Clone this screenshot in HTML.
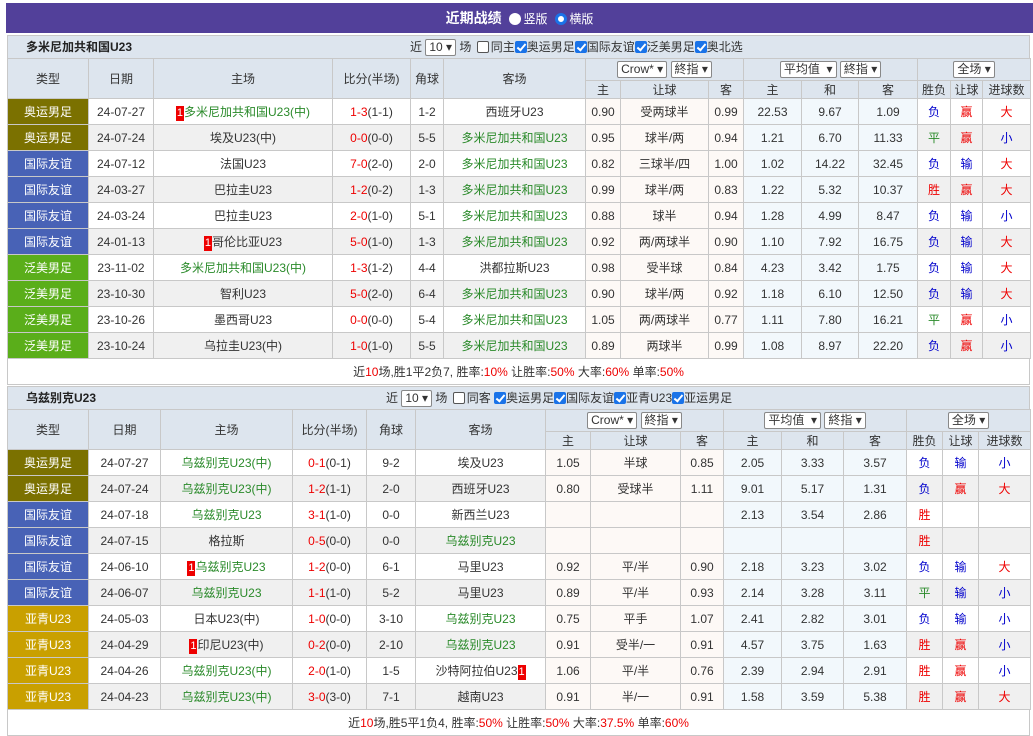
<!DOCTYPE html>
<html><head><meta charset="utf-8"><style>
*{margin:0;padding:0;box-sizing:border-box}
body{width:1033px;height:736px;background:#fff;font-family:"Liberation Sans","Noto Sans CJK SC",sans-serif;font-size:12px;color:#333;position:relative;overflow:hidden}
.title{position:absolute;left:6px;top:3px;width:1027px;height:30px;background:#52409a;color:#fff;text-align:center;line-height:30px;font-size:14px;font-weight:bold}
.title .r{display:inline-block;width:12px;height:12px;border-radius:50%;background:#fff;vertical-align:-2px;margin:0 2px 0 4px}
.title .r2{background:#fff;border:3px solid #1a73e8}
.title small{font-size:12px;font-weight:normal}
.sec{position:absolute;left:7px;width:1023px}
.sh{height:23px;background:#dde5ee;border:1px solid #c8c8c8;border-bottom:none;position:relative;line-height:23px}
.sh b{position:absolute;left:18px;font-size:12px;color:#222}
.sh .ctl{position:absolute;top:0}
.sel{display:inline-block;border:1px solid #888;background:#fff;height:17px;line-height:15px;padding:0 3px;vertical-align:middle;font-size:12px;border-radius:2px}
.cb{display:inline-block;width:12px;height:12px;border:1px solid #555;border-radius:2px;vertical-align:-2px;background:#fff;margin:0 2px}
.ck{display:inline-block;width:12px;height:12px;background:#1a73e8;border-radius:2px;vertical-align:-2px;position:relative;overflow:hidden}
.ck:after{content:"";position:absolute;left:4px;top:1px;width:3px;height:7px;border:solid #fff;border-width:0 2px 2px 0;transform:rotate(40deg)}
table{border-collapse:collapse;table-layout:fixed;width:1023px}
td,th{border:1px solid #c8c8c8;text-align:center;font-weight:normal;white-space:nowrap;overflow:hidden;padding:0}
th{background:#dde5ee;color:#333}
tr.h1 th{height:22px}tr.h2 th{height:17px}
tr.d td{height:26px}
tr.d:nth-child(even) td{background:#f0f0f0}
tr.d td.c{background:#fdf9f6!important}
tr.d td.a{background:#f2f8fc!important}
td.t{color:#fff!important}
.ao{background:#7b7100!important}.gj{background:#4862b6!important}.fm{background:#5aae1a!important}.yq{background:#c9a000!important}
.g{color:#2a8a2a}.rd{color:#e00}.bl{color:#0000cc}.gr{color:#2a8a2a}
.n{display:inline-block;background:#e00;color:#fff;width:8px;line-height:15px;font-size:11px}
.sum{height:26px;border:1px solid #c8c8c8;border-top:none;text-align:center;line-height:26px;padding-left:0}
.sum i{font-style:normal;color:#e00}
</style></head><body>
<div class="title">近期战绩 <span class="r"></span><small>竖版</small> <span class="r r2"></span><small>横版</small></div>

<div class="sec" style="top:35px">
<div class="sh"><b>多米尼加共和国U23</b><span class="ctl" style="left:402px">近 <span class="sel">10 ▾</span> 场 <span class="cb"></span>同主<span class="ck"></span>奥运男足<span class="ck"></span>国际友谊<span class="ck"></span>泛美男足<span class="ck"></span>奥北选</span></div>
<table>
<colgroup><col style="width:81px"><col style="width:65px"><col style="width:179px"><col style="width:78px"><col style="width:33px"><col style="width:142px"><col style="width:35px"><col style="width:88px"><col style="width:35px"><col style="width:58px"><col style="width:57px"><col style="width:59px"><col style="width:33px"><col style="width:32px"><col style="width:48px"></colgroup>
<tr class="h1"><th rowspan="2">类型</th><th rowspan="2">日期</th><th rowspan="2">主场</th><th rowspan="2">比分(半场)</th><th rowspan="2">角球</th><th rowspan="2">客场</th><th colspan="3"><span class="sel">Crow* ▾</span> <span class="sel">終指 ▾</span></th><th colspan="3"><span class="sel">平均值 &nbsp;▾</span> <span class="sel">終指 ▾</span></th><th colspan="3"><span class="sel">全场 ▾</span></th></tr>
<tr class="h2"><th>主</th><th>让球</th><th>客</th><th>主</th><th>和</th><th>客</th><th>胜负</th><th>让球</th><th>进球数</th></tr>
<tr class="d"><td class="t ao">奥运男足</td><td>24-07-27</td><td class="g"><span class="n">1</span>多米尼加共和国U23(中)</td><td><span class="rd">1-3</span>(1-1)</td><td>1-2</td><td>西班牙U23</td><td class="c">0.90</td><td class="c">受两球半</td><td class="c">0.99</td><td class="a">22.53</td><td class="a">9.67</td><td class="a">1.09</td><td class="bl">负</td><td class="rd">赢</td><td class="rd">大</td></tr>
<tr class="d"><td class="t ao">奥运男足</td><td>24-07-24</td><td>埃及U23(中)</td><td><span class="rd">0-0</span>(0-0)</td><td>5-5</td><td class="g">多米尼加共和国U23</td><td class="c">0.95</td><td class="c">球半/两</td><td class="c">0.94</td><td class="a">1.21</td><td class="a">6.70</td><td class="a">11.33</td><td class="gr">平</td><td class="rd">赢</td><td class="bl">小</td></tr>
<tr class="d"><td class="t gj">国际友谊</td><td>24-07-12</td><td>法国U23</td><td><span class="rd">7-0</span>(2-0)</td><td>2-0</td><td class="g">多米尼加共和国U23</td><td class="c">0.82</td><td class="c">三球半/四</td><td class="c">1.00</td><td class="a">1.02</td><td class="a">14.22</td><td class="a">32.45</td><td class="bl">负</td><td class="bl">输</td><td class="rd">大</td></tr>
<tr class="d"><td class="t gj">国际友谊</td><td>24-03-27</td><td>巴拉圭U23</td><td><span class="rd">1-2</span>(0-2)</td><td>1-3</td><td class="g">多米尼加共和国U23</td><td class="c">0.99</td><td class="c">球半/两</td><td class="c">0.83</td><td class="a">1.22</td><td class="a">5.32</td><td class="a">10.37</td><td class="rd">胜</td><td class="rd">赢</td><td class="rd">大</td></tr>
<tr class="d"><td class="t gj">国际友谊</td><td>24-03-24</td><td>巴拉圭U23</td><td><span class="rd">2-0</span>(1-0)</td><td>5-1</td><td class="g">多米尼加共和国U23</td><td class="c">0.88</td><td class="c">球半</td><td class="c">0.94</td><td class="a">1.28</td><td class="a">4.99</td><td class="a">8.47</td><td class="bl">负</td><td class="bl">输</td><td class="bl">小</td></tr>
<tr class="d"><td class="t gj">国际友谊</td><td>24-01-13</td><td><span class="n">1</span>哥伦比亚U23</td><td><span class="rd">5-0</span>(1-0)</td><td>1-3</td><td class="g">多米尼加共和国U23</td><td class="c">0.92</td><td class="c">两/两球半</td><td class="c">0.90</td><td class="a">1.10</td><td class="a">7.92</td><td class="a">16.75</td><td class="bl">负</td><td class="bl">输</td><td class="rd">大</td></tr>
<tr class="d"><td class="t fm">泛美男足</td><td>23-11-02</td><td class="g">多米尼加共和国U23(中)</td><td><span class="rd">1-3</span>(1-2)</td><td>4-4</td><td>洪都拉斯U23</td><td class="c">0.98</td><td class="c">受半球</td><td class="c">0.84</td><td class="a">4.23</td><td class="a">3.42</td><td class="a">1.75</td><td class="bl">负</td><td class="bl">输</td><td class="rd">大</td></tr>
<tr class="d"><td class="t fm">泛美男足</td><td>23-10-30</td><td>智利U23</td><td><span class="rd">5-0</span>(2-0)</td><td>6-4</td><td class="g">多米尼加共和国U23</td><td class="c">0.90</td><td class="c">球半/两</td><td class="c">0.92</td><td class="a">1.18</td><td class="a">6.10</td><td class="a">12.50</td><td class="bl">负</td><td class="bl">输</td><td class="rd">大</td></tr>
<tr class="d"><td class="t fm">泛美男足</td><td>23-10-26</td><td>墨西哥U23</td><td><span class="rd">0-0</span>(0-0)</td><td>5-4</td><td class="g">多米尼加共和国U23</td><td class="c">1.05</td><td class="c">两/两球半</td><td class="c">0.77</td><td class="a">1.11</td><td class="a">7.80</td><td class="a">16.21</td><td class="gr">平</td><td class="rd">赢</td><td class="bl">小</td></tr>
<tr class="d"><td class="t fm">泛美男足</td><td>23-10-24</td><td>乌拉圭U23(中)</td><td><span class="rd">1-0</span>(1-0)</td><td>5-5</td><td class="g">多米尼加共和国U23</td><td class="c">0.89</td><td class="c">两球半</td><td class="c">0.99</td><td class="a">1.08</td><td class="a">8.97</td><td class="a">22.20</td><td class="bl">负</td><td class="rd">赢</td><td class="bl">小</td></tr>
</table>
<div class="sum">近<i>10</i>场,胜1平2负7, 胜率:<i>10%</i> 让胜率:<i>50%</i> 大率:<i>60%</i> 单率:<i>50%</i></div>
</div>

<div class="sec" style="top:386px">
<div class="sh"><b>乌兹别克U23</b><span class="ctl" style="left:378px">近 <span class="sel">10 ▾</span> 场 <span class="cb"></span>同客 <span class="ck"></span>奥运男足<span class="ck"></span>国际友谊<span class="ck"></span>亚青U23<span class="ck"></span>亚运男足</span></div>
<table>
<colgroup><col style="width:81px"><col style="width:72px"><col style="width:132px"><col style="width:74px"><col style="width:49px"><col style="width:130px"><col style="width:45px"><col style="width:90px"><col style="width:43px"><col style="width:58px"><col style="width:62px"><col style="width:63px"><col style="width:36px"><col style="width:36px"><col style="width:52px"></colgroup>
<tr class="h1"><th rowspan="2">类型</th><th rowspan="2">日期</th><th rowspan="2">主场</th><th rowspan="2">比分(半场)</th><th rowspan="2">角球</th><th rowspan="2">客场</th><th colspan="3"><span class="sel">Crow* ▾</span> <span class="sel">終指 ▾</span></th><th colspan="3"><span class="sel">平均值 &nbsp;▾</span> <span class="sel">終指 ▾</span></th><th colspan="3"><span class="sel">全场 ▾</span></th></tr>
<tr class="h2"><th>主</th><th>让球</th><th>客</th><th>主</th><th>和</th><th>客</th><th>胜负</th><th>让球</th><th>进球数</th></tr>
<tr class="d"><td class="t ao">奥运男足</td><td>24-07-27</td><td class="g">乌兹别克U23(中)</td><td><span class="rd">0-1</span>(0-1)</td><td>9-2</td><td>埃及U23</td><td class="c">1.05</td><td class="c">半球</td><td class="c">0.85</td><td class="a">2.05</td><td class="a">3.33</td><td class="a">3.57</td><td class="bl">负</td><td class="bl">输</td><td class="bl">小</td></tr>
<tr class="d"><td class="t ao">奥运男足</td><td>24-07-24</td><td class="g">乌兹别克U23(中)</td><td><span class="rd">1-2</span>(1-1)</td><td>2-0</td><td>西班牙U23</td><td class="c">0.80</td><td class="c">受球半</td><td class="c">1.11</td><td class="a">9.01</td><td class="a">5.17</td><td class="a">1.31</td><td class="bl">负</td><td class="rd">赢</td><td class="rd">大</td></tr>
<tr class="d"><td class="t gj">国际友谊</td><td>24-07-18</td><td class="g">乌兹别克U23</td><td><span class="rd">3-1</span>(1-0)</td><td>0-0</td><td>新西兰U23</td><td class="c"></td><td class="c"></td><td class="c"></td><td class="a">2.13</td><td class="a">3.54</td><td class="a">2.86</td><td class="rd">胜</td><td></td><td></td></tr>
<tr class="d"><td class="t gj">国际友谊</td><td>24-07-15</td><td>格拉斯</td><td><span class="rd">0-5</span>(0-0)</td><td>0-0</td><td class="g">乌兹别克U23</td><td class="c"></td><td class="c"></td><td class="c"></td><td class="a"></td><td class="a"></td><td class="a"></td><td class="rd">胜</td><td></td><td></td></tr>
<tr class="d"><td class="t gj">国际友谊</td><td>24-06-10</td><td class="g"><span class="n">1</span>乌兹别克U23</td><td><span class="rd">1-2</span>(0-0)</td><td>6-1</td><td>马里U23</td><td class="c">0.92</td><td class="c">平/半</td><td class="c">0.90</td><td class="a">2.18</td><td class="a">3.23</td><td class="a">3.02</td><td class="bl">负</td><td class="bl">输</td><td class="rd">大</td></tr>
<tr class="d"><td class="t gj">国际友谊</td><td>24-06-07</td><td class="g">乌兹别克U23</td><td><span class="rd">1-1</span>(1-0)</td><td>5-2</td><td>马里U23</td><td class="c">0.89</td><td class="c">平/半</td><td class="c">0.93</td><td class="a">2.14</td><td class="a">3.28</td><td class="a">3.11</td><td class="gr">平</td><td class="bl">输</td><td class="bl">小</td></tr>
<tr class="d"><td class="t yq">亚青U23</td><td>24-05-03</td><td>日本U23(中)</td><td><span class="rd">1-0</span>(0-0)</td><td>3-10</td><td class="g">乌兹别克U23</td><td class="c">0.75</td><td class="c">平手</td><td class="c">1.07</td><td class="a">2.41</td><td class="a">2.82</td><td class="a">3.01</td><td class="bl">负</td><td class="bl">输</td><td class="bl">小</td></tr>
<tr class="d"><td class="t yq">亚青U23</td><td>24-04-29</td><td><span class="n">1</span>印尼U23(中)</td><td><span class="rd">0-2</span>(0-0)</td><td>2-10</td><td class="g">乌兹别克U23</td><td class="c">0.91</td><td class="c">受半/一</td><td class="c">0.91</td><td class="a">4.57</td><td class="a">3.75</td><td class="a">1.63</td><td class="rd">胜</td><td class="rd">赢</td><td class="bl">小</td></tr>
<tr class="d"><td class="t yq">亚青U23</td><td>24-04-26</td><td class="g">乌兹别克U23(中)</td><td><span class="rd">2-0</span>(1-0)</td><td>1-5</td><td>沙特阿拉伯U23<span class="n">1</span></td><td class="c">1.06</td><td class="c">平/半</td><td class="c">0.76</td><td class="a">2.39</td><td class="a">2.94</td><td class="a">2.91</td><td class="rd">胜</td><td class="rd">赢</td><td class="bl">小</td></tr>
<tr class="d"><td class="t yq">亚青U23</td><td>24-04-23</td><td class="g">乌兹别克U23(中)</td><td><span class="rd">3-0</span>(3-0)</td><td>7-1</td><td>越南U23</td><td class="c">0.91</td><td class="c">半/一</td><td class="c">0.91</td><td class="a">1.58</td><td class="a">3.59</td><td class="a">5.38</td><td class="rd">胜</td><td class="rd">赢</td><td class="rd">大</td></tr>
</table>
<div class="sum">近<i>10</i>场,胜5平1负4, 胜率:<i>50%</i> 让胜率:<i>50%</i> 大率:<i>37.5%</i> 单率:<i>60%</i></div>
</div>
</body></html>
